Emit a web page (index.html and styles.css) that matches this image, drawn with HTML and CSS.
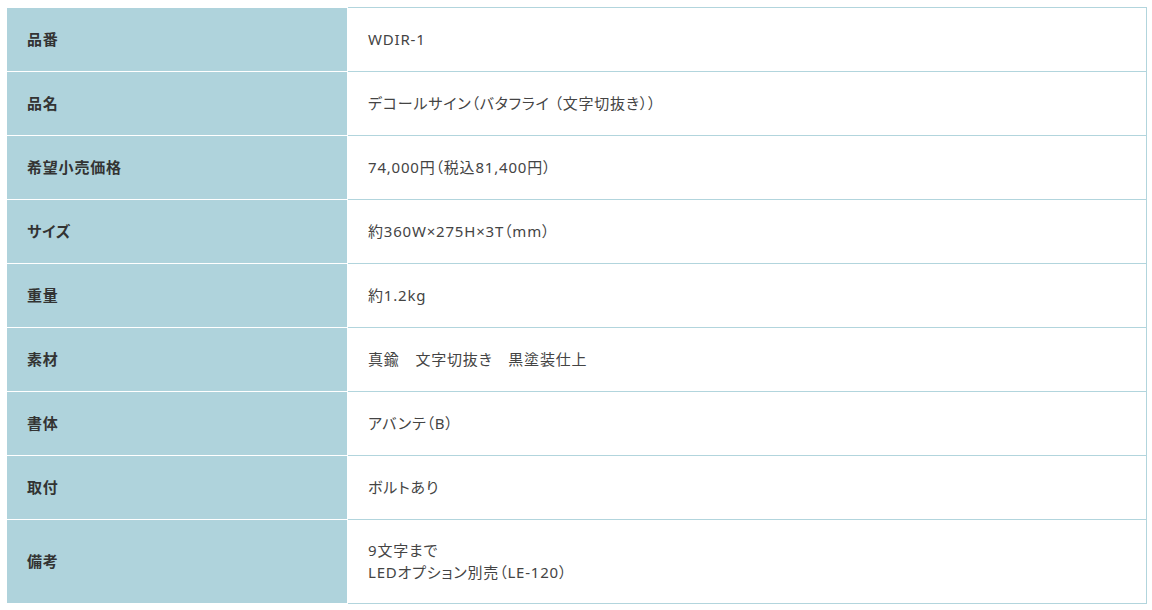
FILE: index.html
```html
<!DOCTYPE html>
<html lang="ja">
<head>
<meta charset="utf-8">
<link rel="stylesheet" href="styles.css">
</head>
<body>
<div class="wrap">
<table class="spec">
<colgroup><col class="c1"><col class="c2"></colgroup>
<tbody>
<tr><th>品番</th><td>WDIR-1</td></tr>
<tr><th>品名</th><td>デコールサイン（バタフライ （文字切抜き））</td></tr>
<tr><th>希望小売価格</th><td>74,000円（税込81,400円）</td></tr>
<tr><th>サイズ</th><td>約360W×275H×3T（mm）</td></tr>
<tr><th>重量</th><td>約1.2kg</td></tr>
<tr><th>素材</th><td>真鍮　文字切抜き　黒塗装仕上</td></tr>
<tr><th>書体</th><td>アバンテ（B）</td></tr>
<tr><th>取付</th><td>ボルトあり</td></tr>
<tr><th>備考</th><td>9文字まで<br>LEDオプション別売（LE-120）</td></tr>
</tbody>
</table>
</div>
</body>
</html>
```
FILE: styles.css
```css
html, body {
  margin: 0;
  padding: 0;
  background: #fff;
}
.wrap {
  padding: 7px 6px;
}
.spec {
  width: 1140px;
  border-collapse: collapse;
  table-layout: fixed;
  font-family: "Noto Sans", "Noto Sans CJK JP", sans-serif;
  font-feature-settings: "palt";
  letter-spacing: 0.8px;
  font-size: 15px;
  line-height: 22px;
}
.c1 { width: 341px; }
.c2 { width: 799px; }
.spec tr {
  height: 64px;
}
.spec th,
.spec td {
  padding: 19px 20px 20px;
  text-align: left;
  vertical-align: middle;
}
.spec th {
  background: #afd3dc;
  border: 1px solid #fff;
  color: #333;
  font-family: "Noto Sans CJK JP", sans-serif;
  font-weight: 700;
}
.spec td {
  background: #fff;
  border: 1px solid #b2d5dd;
  color: #444;
  font-weight: 400;
}
```
